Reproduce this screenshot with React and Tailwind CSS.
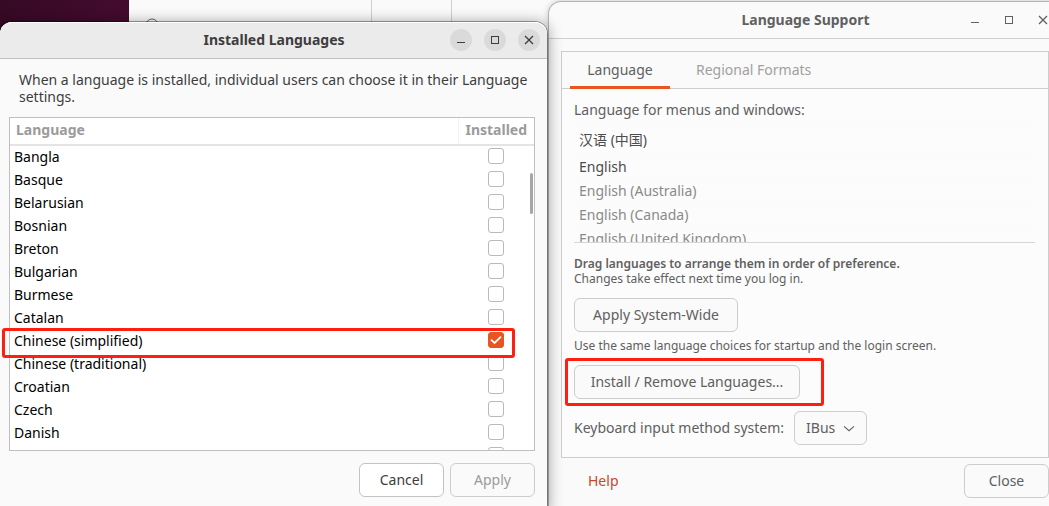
import React, { useState } from "react";

const languages = [
  "Bangla",
  "Basque",
  "Belarusian",
  "Bosnian",
  "Breton",
  "Bulgarian",
  "Burmese",
  "Catalan",
  "Chinese (simplified)",
  "Chinese (traditional)",
  "Croatian",
  "Czech",
  "Danish",
  "Dutch",
];

const menuLanguages = [
  { name: "汉语 (中国)", row: "h-[29px] text-[#4c4c4c]" },
  { name: "English", row: "h-6 text-[#4c4c4c]" },
  { name: "English (Australia)", row: "h-6 text-[#8a8a8a]" },
  { name: "English (Canada)", row: "h-6 text-[#8a8a8a]" },
  { name: "English (United Kingdom)", row: "h-6 text-[#8a8a8a]" },
];

function WindowControls({ button }) {
  const base = "grid size-[22px] place-items-center rounded-full " + button;
  return (
    <div className="flex justify-end gap-3">
      <button type="button" aria-label="Minimize" className={base}>
        <svg className="size-4" viewBox="0 0 16 16" fill="none" stroke="currentColor" shapeRendering="crispEdges">
          <path d="M4 10.5h8" />
        </svg>
      </button>
      <button type="button" aria-label="Maximize" className={base}>
        <svg className="size-4" viewBox="0 0 16 16" fill="none" stroke="currentColor" shapeRendering="crispEdges">
          <path d="M4.5 4.5h7v7h-7z" />
        </svg>
      </button>
      <button type="button" aria-label="Close window" className={base}>
        <svg className="size-4" viewBox="0 0 16 16" fill="none" stroke="currentColor" strokeWidth="1.3">
          <path d="M4 4l8 8M12 4l-8 8" />
        </svg>
      </button>
    </div>
  );
}

function LanguageRow({ name }) {
  const [checked, setChecked] = useState(name === "Chinese (simplified)");
  const id = "lang-" + name.toLowerCase().replace(/[^a-z]+/g, "-");
  return (
    <tr className="h-[23px]">
      <td className="p-0 pl-1 text-black">
        <label htmlFor={id}>{name}</label>
      </td>
      <td className="p-0 pb-0.5">
        <div className="grid place-items-center">
          <input
            id={id}
            type="checkbox"
            checked={checked}
            onChange={(e) => setChecked(e.target.checked)}
            className="col-start-1 row-start-1 size-4 appearance-none rounded-[3px] border border-[#b9b9b9] bg-white checked:border-[#e95420] checked:bg-[#e95420]"
          />
          {checked && (
            <svg
              className="pointer-events-none col-start-1 row-start-1 size-4 text-white"
              viewBox="0 0 16 16"
              fill="none"
              stroke="currentColor"
              strokeWidth="1.8"
            >
              <path d="M3 7.6l3.6 3.4L13 4.6" />
            </svg>
          )}
        </div>
      </td>
    </tr>
  );
}

function InstalledLanguages() {
  return (
    <section className="relative z-10 mt-[22px] flex min-w-0 flex-[547_1_0%] flex-col rounded-t-xl bg-[#fafafa] text-[#3d3d3d] shadow-[0_0_0_1px_rgba(0,0,0,0.35),0_2px_14px_2px_rgba(0,0,0,0.35)]">
      <header className="grid h-[37px] grid-cols-[1fr_auto_1fr] items-center rounded-t-xl border-b border-[#bfbfbf] bg-[#ebebeb] pr-[7px] pl-2 shadow-[inset_0_1px_0_#ffffff]">
        <h1 className="col-start-2 font-bold">Installed Languages</h1>
        <WindowControls button="bg-[#dadada] text-[#3d3d3d]" />
      </header>
      <p className="px-[19px] pt-3 leading-[17px]">
        When a language is installed, individual users can choose it in their Language settings.
      </p>
      <div className="relative mt-3 mr-3 pl-[9px]">
        <div className="h-[334px] overflow-hidden border border-[#bfbfbf] bg-white">
          <table className="w-full table-fixed border-collapse">
            <thead>
              <tr className="h-[27px] border-b-2 border-[#e4e4e4] text-[#9b9b9b]">
                <th className="p-0 pb-0.5 pl-1.5 text-left font-bold">Language</th>
                <th className="w-[76px] border-l border-l-[#f3f3f3] p-0 pb-0.5 text-center font-bold">Installed</th>
              </tr>
            </thead>
            <tbody>
              {languages.map((name) => (
                <LanguageRow key={name} name={name} />
              ))}
            </tbody>
          </table>
        </div>
        <div className="absolute top-14 right-0.5 h-[41px] w-[3px] rounded-full bg-[#a6a6a6]" />
        <div className="pointer-events-none absolute top-[211px] right-5 left-0.5 h-[30px] rounded-[3px] border-3 border-[#ff1f11]" />
      </div>
      <footer className="flex justify-end gap-1.5 px-3 py-3">
        <button type="button" className="h-[34px] w-[85px] rounded-md border border-[#c3c3c3] bg-white">
          Cancel
        </button>
        <button
          type="button"
          disabled
          className="h-[34px] w-[85px] rounded-md border border-[#cdcdcd] bg-[#fafafa] text-[#9b9b9b]"
        >
          Apply
        </button>
      </footer>
    </section>
  );
}

function LanguageSupport() {
  const button = "h-[34px] rounded-md border border-[#cdcdcd] bg-[#fafafa]";
  return (
    <section className="relative mt-0.5 -mr-[11px] flex min-w-0 flex-[511_1_0%] flex-col rounded-t-xl bg-[#fafafa] text-[#606060] shadow-[0_0_0_1px_#b4b4b4,0_0_6px_1px_rgba(0,0,0,0.2)]">
      <header className="grid h-[37px] grid-cols-[1fr_auto_1fr] items-center border-b border-[#d0d0d0] pr-1.5 pl-2">
        <h1 className="col-start-2 font-bold">Language Support</h1>
        <WindowControls button="" />
      </header>
      <div className="mt-3 mr-[11px] ml-3 border border-[#cdcdcd] bg-[#fcfcfc]">
        <div role="tablist" className="flex h-[37px] gap-2 border-b border-[#cdcdcd] bg-[#fafafa] px-2">
          <button type="button" role="tab" aria-selected="true" className="-mb-px w-[100px] border-b-3 border-[#e95420] pt-0.5">
            Language
          </button>
          <button type="button" role="tab" aria-selected="false" className="-mb-px border-b-3 border-transparent px-[18px] pt-0.5 text-[#a0a0a0]">
            Regional Formats
          </button>
        </div>
        <div className="flex flex-col items-start pt-3 pr-[13px] pb-3 pl-3">
          <p className="leading-[18px]">Language for menus and windows:</p>
          <ul className="mt-1.5 h-[118px] w-full overflow-hidden border-b border-[#d6d6d6]">
            {menuLanguages.map(({ name, row }) => (
              <li key={name} className={"flex items-center border-t border-[#fafafa] pl-[5px] " + row}>
                {name}
              </li>
            ))}
          </ul>
          <p className="mt-[13px] text-[12px] leading-[15px] font-semibold">
            Drag languages to arrange them in order of preference.
          </p>
          <p className="text-[12px] leading-[15px]">Changes take effect next time you log in.</p>
          <button type="button" className={"mt-3 w-[164px] " + button}>
            Apply System-Wide
          </button>
          <p className="mt-1.5 text-[12px] leading-[15px]">
            Use the same language choices for startup and the login screen.
          </p>
          <div className="relative mt-3">
            <button type="button" className={"w-[226px] " + button}>
              Install / Remove Languages...
            </button>
            <div className="pointer-events-none absolute -top-[7px] -right-6 -bottom-[7px] -left-[9px] rounded-[3px] border-3 border-[#ff1f11]" />
          </div>
          <div className="mt-3 flex items-center gap-2.5">
            <label htmlFor="input-method">Keyboard input method system:</label>
            <div className="grid items-center">
              <select
                id="input-method"
                defaultValue="IBus"
                className={"col-start-1 row-start-1 w-[73px] appearance-none pl-[11px] " + button}
              >
                <option>IBus</option>
                <option>XIM</option>
                <option>none</option>
              </select>
              <svg
                className="pointer-events-none col-start-1 row-start-1 mr-2.5 size-4 justify-self-end"
                viewBox="0 0 16 16"
                fill="none"
                stroke="currentColor"
                strokeWidth="1.1"
              >
                <path d="M3 6.3l5 4.4 5-4.4" />
              </svg>
            </div>
          </div>
        </div>
      </div>
      <footer className="mt-1.5 mr-[11px] ml-[39px] flex items-center justify-between">
        <a href="#help" className="text-[#c9472b]">
          Help
        </a>
        <button type="button" className={"w-[85px] " + button}>
          Close
        </button>
      </footer>
    </section>
  );
}

function Backdrop() {
  return (
    <div className="absolute inset-0 flex bg-[#fafafa]" aria-hidden="true">
      <div className="w-[129px] bg-linear-to-r from-[#360925] to-[#430c2f]" />
      <div className="w-[243px] border-r border-[#cfcfcf] pt-[18px] pl-4">
        <svg className="size-3.5 text-[#666]" viewBox="0 0 14 14" fill="none" stroke="currentColor">
          <circle cx="7" cy="7" r="6" />
        </svg>
      </div>
      <div className="w-20 border-r border-[#cfcfcf]" />
    </div>
  );
}

export default function App() {
  return (
    <main className="relative flex min-h-screen gap-0.5 overflow-hidden font-['Noto_Sans','Noto_Sans_CJK_SC',sans-serif] text-[14px] leading-5">
      <Backdrop />
      <InstalledLanguages />
      <LanguageSupport />
    </main>
  );
}
